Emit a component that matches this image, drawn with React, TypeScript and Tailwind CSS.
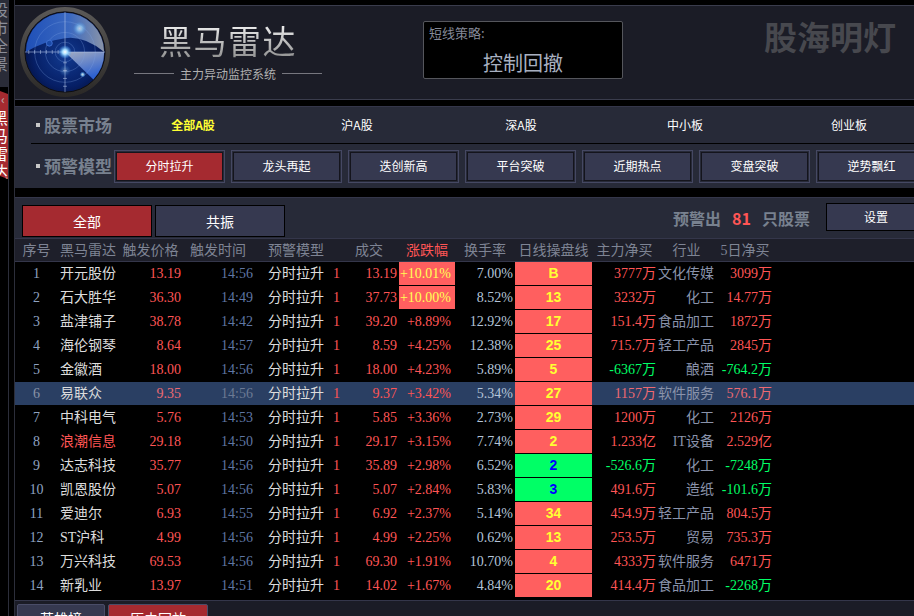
const SERIF = "font-['Liberation_Serif','Noto_Sans_CJK_SC',serif]";

type Row = {
	name: string;
	price: string;
	time: string;
	deal: string;
	pct: string;
	turn: string;
	line: string;
	main: string;
	industry: string;
	five: string;
};

const rows: Row[] = [
	{ name: "开元股份", price: "13.19", time: "14:56", deal: "13.19", pct: "+10.01%", turn: "7.00%", line: "B", main: "3777万", industry: "文化传媒", five: "3099万" },
	{ name: "石大胜华", price: "36.30", time: "14:49", deal: "37.73", pct: "+10.00%", turn: "8.52%", line: "13", main: "3232万", industry: "化工", five: "14.77万" },
	{ name: "盐津铺子", price: "38.78", time: "14:42", deal: "39.20", pct: "+8.89%", turn: "12.92%", line: "17", main: "151.4万", industry: "食品加工", five: "1872万" },
	{ name: "海伦钢琴", price: "8.64", time: "14:57", deal: "8.59", pct: "+4.25%", turn: "12.38%", line: "25", main: "715.7万", industry: "轻工产品", five: "2845万" },
	{ name: "金徽酒", price: "18.00", time: "14:56", deal: "18.00", pct: "+4.23%", turn: "5.89%", line: "5", main: "-6367万", industry: "酿酒", five: "-764.2万" },
	{ name: "易联众", price: "9.35", time: "14:56", deal: "9.37", pct: "+3.42%", turn: "5.34%", line: "27", main: "1157万", industry: "软件服务", five: "576.1万" },
	{ name: "中科电气", price: "5.76", time: "14:53", deal: "5.85", pct: "+3.36%", turn: "2.73%", line: "29", main: "1200万", industry: "化工", five: "2126万" },
	{ name: "浪潮信息", price: "29.18", time: "14:50", deal: "29.17", pct: "+3.15%", turn: "7.74%", line: "2", main: "1.233亿", industry: "IT设备", five: "2.529亿" },
	{ name: "达志科技", price: "35.77", time: "14:56", deal: "35.89", pct: "+2.98%", turn: "6.52%", line: "-2", main: "-526.6万", industry: "化工", five: "-7248万" },
	{ name: "凯恩股份", price: "5.07", time: "14:56", deal: "5.07", pct: "+2.84%", turn: "5.83%", line: "-3", main: "491.6万", industry: "造纸", five: "-101.6万" },
	{ name: "爱迪尔", price: "6.93", time: "14:55", deal: "6.92", pct: "+2.37%", turn: "5.14%", line: "34", main: "454.9万", industry: "轻工产品", five: "804.5万" },
	{ name: "ST沪科", price: "4.99", time: "14:56", deal: "4.99", pct: "+2.25%", turn: "0.62%", line: "13", main: "253.5万", industry: "贸易", five: "735.3万" },
	{ name: "万兴科技", price: "69.53", time: "14:56", deal: "69.30", pct: "+1.91%", turn: "10.70%", line: "4", main: "4333万", industry: "软件服务", five: "6471万" },
	{ name: "新乳业", price: "13.97", time: "14:51", deal: "14.02", pct: "+1.67%", turn: "4.84%", line: "20", main: "414.4万", industry: "食品加工", five: "-2268万" }
];

const markets = ["全部A股", "沪A股", "深A股", "中小板", "创业板"];
const models = ["分时拉升", "龙头再起", "迭创新高", "平台突破", "近期热点", "变盘突破", "逆势飘红"];

const columns = [
	{ label: "序号", width: "w-[43px]" },
	{ label: "黑马雷达", width: "w-[60px]" },
	{ label: "触发价格", width: "w-[65px]" },
	{ label: "触发时间", width: "w-[70px]" },
	{ label: "预警模型", width: "w-[86px]" },
	{ label: "成交", width: "w-[60px]" },
	{ label: "涨跌幅", width: "w-[56px] text-[#ff5555]" },
	{ label: "换手率", width: "w-[60px]" },
	{ label: "日线操盘线", width: "w-[77px]" },
	{ label: "主力净买", width: "w-[65px]" },
	{ label: "行业", width: "w-[59px]" },
	{ label: "5日净买", width: "w-[58px]" }
];

const moneyColor = (v: string, active: boolean) =>
	v.startsWith("-") ? "text-[#00ff66]" : active ? "text-[#ee6a72]" : "text-[#ff5555]";

const Radar = () => (
	<svg width="92" height="92" viewBox="0 0 94 94" className="shrink-0">
		<defs>
			<linearGradient id="ring" x1="0" y1="0" x2="0" y2="1">
				<stop offset="0" stopColor="#5c5a58" />
				<stop offset="1" stopColor="#2a2826" />
			</linearGradient>
			<radialGradient id="dish" cx="0.5" cy="0.55" r="0.55">
				<stop offset="0" stopColor="#123a90" />
				<stop offset="0.7" stopColor="#061f66" />
				<stop offset="1" stopColor="#031040" />
			</radialGradient>
			<linearGradient id="glass" x1="0" y1="0.3" x2="1" y2="0.3">
				<stop offset="0" stopColor="#1f50b8" />
				<stop offset="0.55" stopColor="#3a68c0" />
				<stop offset="1" stopColor="#8a94a8" />
			</linearGradient>
			<linearGradient id="sweep" x1="0" y1="0" x2="0.4" y2="1">
				<stop offset="0" stopColor="#a4acc0" />
				<stop offset="1" stopColor="#2f62d0" />
			</linearGradient>
			<radialGradient id="glow">
				<stop offset="0" stopColor="#ffffff" />
				<stop offset="0.35" stopColor="#a8e0ff" />
				<stop offset="1" stopColor="#3f9fff" stopOpacity="0" />
			</radialGradient>
		</defs>
		<circle cx="47" cy="47" r="46" fill="url(#ring)" />
		<circle cx="47" cy="47" r="41" fill="url(#dish)" stroke="#0c0c10" strokeWidth="1" />
		<path d="M7 47 A40 40 0 0 1 87 47 Q66 30 47 33 Q25 36 7 47 Z" fill="url(#glass)" />
		<path d="M47 47 L87 47 A40 40 0 0 1 76 75 Z" fill="url(#sweep)" />
		<g fill="none" stroke="#7fa4e4" strokeOpacity="0.3">
			<circle cx="47" cy="47" r="10" />
			<circle cx="47" cy="47" r="20" />
			<circle cx="47" cy="47" r="31" />
		</g>
		<path d="M47 6 V88 M6 47 H88" stroke="#b4c8ea" strokeOpacity="0.7" strokeWidth="0.8" />
		<path d="M10 45 V49 M16 45 V49 M22 45 V49 M28 45 V49 M34 45 V49 M40 45 V49 M45 58 H49 M45 66 H49 M45 74 H49 M45 82 H49" stroke="#b4c8ea" strokeOpacity="0.7" strokeWidth="0.8" />
		<circle cx="47" cy="47" r="7" fill="url(#glow)" />
		<circle cx="62" cy="23" r="7" fill="url(#glow)" opacity="0.6" />
		<circle cx="65" cy="70" r="3" fill="url(#glow)" opacity="0.8" />
		<circle cx="31" cy="38" r="3" fill="#1a4aa8" stroke="#3f6fd0" />
		<circle cx="47" cy="66" r="6" fill="url(#glow)" opacity="0.25" />
	</svg>
);

const ModelButton = ({ label, active }: { label: string; active: boolean }) => (
	<div className="h-[33px] w-[111px] shrink-0 border border-[#454863] p-px">
		<div
			className={`flex h-full items-center justify-center border border-[#14141c] text-[12px] text-white ${
				active ? "bg-[#a52a30]" : "bg-[#363950]"
			}`}
		>
			{label}
		</div>
	</div>
);

const StockRow = ({ row, index }: { row: Row; index: number }) => {
	const active = index === 5;
	const green = row.line.startsWith("-");
	const limit = index < 2;

	return (
		<div className={`mb-px flex h-[23px] items-center text-[14px] ${active ? "bg-[#2a3f63]" : ""}`}>
			<div className={`w-[43px] text-center ${active ? "text-[#8a94a8]" : "text-[#8fa3c0]"}`}>{index + 1}</div>
			<div className={`w-[62px] pl-[2px] ${index === 7 ? "text-[#ff5555]" : "text-[#dcdcdc]"}`}>{row.name}</div>
			<div className={`w-[61px] text-right ${active ? "text-[#ee6a72]" : "text-[#ff5555]"}`}>{row.price}</div>
			<div className={`w-[72px] text-right ${active ? "text-[#6c7a94]" : "text-[#5f76a4]"}`}>{row.time}</div>
			<div className="w-[78px] pl-[15px] text-[#dcdcdc]">分时拉升</div>
			<div className="w-[14px] pl-[2px] text-[#ff5555]">1</div>
			<div className="w-[54px] pr-[2px] text-right text-[#ff5555]">{row.deal}</div>
			<div
				className={`flex h-[23px] w-[56px] items-center justify-end pr-[4px] ${
					limit ? "bg-[#ff5f5f] text-[#ffff55]" : "text-[#ff5555]"
				}`}
			>
				{row.pct}
			</div>
			<div className="w-[60px] pr-[2px] text-right text-[#b4c4d8]">{row.turn}</div>
			<div
				className={`flex h-[23px] w-[77px] items-center justify-center font-['Liberation_Sans',sans-serif] text-[14px] font-bold ${
					green ? "bg-[#00ff66] text-[#0000ff]" : "bg-[#ff5f5f] text-[#ffff33]"
				}`}
			>
				{row.line.replace("-", "")}
			</div>
			<div className={`w-[64px] text-right ${moneyColor(row.main, active)}`}>{row.main}</div>
			<div className="w-[58px] text-right text-[#8a93ab]">{row.industry}</div>
			<div className={`w-[58px] text-right ${moneyColor(row.five, active)}`}>{row.five}</div>
		</div>
	);
};

export default function App() {
	return (
		<div className={`flex h-[616px] w-[914px] overflow-hidden bg-black ${SERIF}`}>
			{/* clipped side rail */}
			<div className="flex w-[9px] shrink-0 flex-col overflow-hidden border-r border-[#2c2e3a] font-['Noto_Sans_CJK_SC',sans-serif] text-[16px] leading-[18px]">
				<div className="flex h-[87px] shrink-0 flex-col bg-[#2a2c38] text-[#8a8d98]">
					<span className="-ml-[8px]">股</span>
					<span className="-ml-[8px]">市</span>
					<span className="-ml-[8px]">全</span>
					<span className="-ml-[8px]">景</span>
				</div>
				<div className="mt-[4px] flex h-[88px] shrink-0 flex-col bg-[#a52a30] text-white [clip-path:polygon(0_0,100%_3px,100%_100%,0_calc(100%-3px))]">
					<span className="h-[17px] shrink-0 pl-px text-[12px] font-bold leading-[16px] text-[#b8a0a0]">‹</span>
					<span className="-ml-[8px]">黑</span>
					<span className="-ml-[8px]">马</span>
					<span className="-ml-[8px]">雷</span>
					<span className="-ml-[8px]">达</span>
				</div>
			</div>

			<div className="ml-[5px] flex min-w-0 flex-1 flex-col border-l border-[#2c2e3a] pt-[5px]">
				{/* header */}
				<div className="flex h-[95px] shrink-0 items-center border-y border-[#3a3c4c] bg-[#1b1c26]">
					<div className="mb-[2px] ml-[4px] shrink-0">
						<Radar />
					</div>
					<div className="mb-[5px] ml-[24px] flex w-[186px] shrink-0 flex-col items-center font-['Noto_Sans_CJK_SC',sans-serif]">
						<div className="whitespace-nowrap bg-gradient-to-b from-white to-[#8a8a8a] bg-clip-text text-[33px] leading-[42px] tracking-[1.5px] text-transparent">
							黑马雷达
						</div>
						<div className="mt-[5px] flex items-center gap-[6px] whitespace-nowrap text-[12px] leading-[16px] text-[#b0b0b0]">
							<div className="h-px w-[40px] bg-[#77777f]" />
							主力异动监控系统
							<div className="h-px w-[40px] bg-[#77777f]" />
						</div>
					</div>
					<div className="mb-[5px] ml-[102px] flex h-[58px] w-[200px] shrink-0 flex-col rounded-[2px] border border-[#55565c] bg-black font-['Noto_Sans_CJK_SC',sans-serif]">
						<div className="pl-[5px] pt-px text-[13px] leading-[20px] text-[#858a98]">短线策略:</div>
						<div className="mt-[6px] text-center text-[20px] leading-[28px] text-[#a8b0c0]">控制回撤</div>
					</div>
					<div className="mb-[32px] ml-[141px] whitespace-nowrap font-['Noto_Sans_CJK_SC',sans-serif] text-[33px] font-bold leading-none text-[#47484e]">
						股海明灯
					</div>
				</div>

				{/* market and model filters */}
				<div className="mt-[6px] flex h-[82px] shrink-0 flex-col border-t border-[#34364a] bg-[#272a38] font-['Noto_Sans_CJK_SC',sans-serif]">
					<div className="ml-[16px] flex h-[37px] shrink-0 items-center border-b border-black">
						<div className="ml-[5px] h-[4px] w-[4px] shrink-0 bg-[#c8c8c8]" />
						<div className="ml-[4px] w-[67px] shrink-0 whitespace-nowrap text-[17px] font-bold text-[#78818f]">股票市场</div>
						{markets.map((m, i) => (
							<div
								key={m}
								className={`w-[164px] shrink-0 text-center text-[12px] ${
									i === 0 ? "font-bold text-[#ffff33]" : "text-white"
								}`}
							>
								{m}
							</div>
						))}
					</div>
					<div className="flex flex-1 items-center">
						<div className="ml-[21px] h-[4px] w-[4px] shrink-0 bg-[#c8c8c8]" />
						<div className="ml-[4px] w-[70px] shrink-0 whitespace-nowrap text-[17px] font-bold text-[#78818f]">预警模型</div>
						<div className="flex shrink-0 gap-[6px]">
							{models.map((m, i) => (
								<ModelButton key={m} label={m} active={i === 0} />
							))}
						</div>
					</div>
				</div>

				{/* table */}
				<div className="mt-[9px] flex min-h-0 flex-1 flex-col border-t border-[#34364a]">
					<div className="flex h-[40px] shrink-0 items-start bg-[#272a38] pl-[7px] pt-[7px] font-['Noto_Sans_CJK_SC',sans-serif]">
						<div className="flex h-[32px] w-[130px] shrink-0 items-center justify-center border border-black bg-[#a52a30] text-[14px] text-white">
							全部
						</div>
						<div className="ml-[3px] flex h-[32px] w-[130px] shrink-0 items-center justify-center border border-black bg-[#363950] text-[14px] text-white">
							共振
						</div>
						<div className="ml-[388px] flex h-[26px] w-[137px] shrink-0 items-center justify-between whitespace-nowrap text-[16px] font-bold text-[#78818f]">
							<span>预警出</span>
							<span className="text-[#ff5555]">81</span>
							<span>只股票</span>
						</div>
						<div className="-mt-[2px] ml-[16px] flex h-[28px] w-[100px] shrink-0 items-center justify-center border border-black bg-[#363950] text-[12px] text-white">
							设置
						</div>
					</div>

					<div className="flex h-[24px] shrink-0 items-center border-y border-[#34364a] bg-[#1e1f2a] text-[14px] text-[#7e8494]">
						{columns.map((c, i) => (
							<div key={c.label} className={`${c.width} shrink-0 whitespace-nowrap ${i === 1 ? "pl-[2px]" : "text-center"}`}>
								{c.label}
							</div>
						))}
					</div>

					<div className="shrink-0">
						{rows.map((r, i) => (
							<StockRow key={r.name} row={r} index={i} />
						))}
					</div>

					<div className="mt-[2px] flex flex-1 items-start gap-[3px] border-t border-[#34364a] bg-[#1b1c26] pl-[2px] pt-[3px] font-['Noto_Sans_CJK_SC',sans-serif] text-[14px] text-white">
						<div className="flex h-[24px] w-[88px] shrink-0 justify-center rounded-t-[2px] border border-[#4a4d68] bg-[#363950] pt-[3px] leading-[20px]">
							英雄榜
						</div>
						<div className="flex h-[24px] w-[100px] shrink-0 justify-center rounded-t-[2px] border border-[#4a4d68] bg-[#a52a30] pt-[3px] leading-[20px]">
							历史回放
						</div>
					</div>
				</div>
			</div>
		</div>
	);
}
